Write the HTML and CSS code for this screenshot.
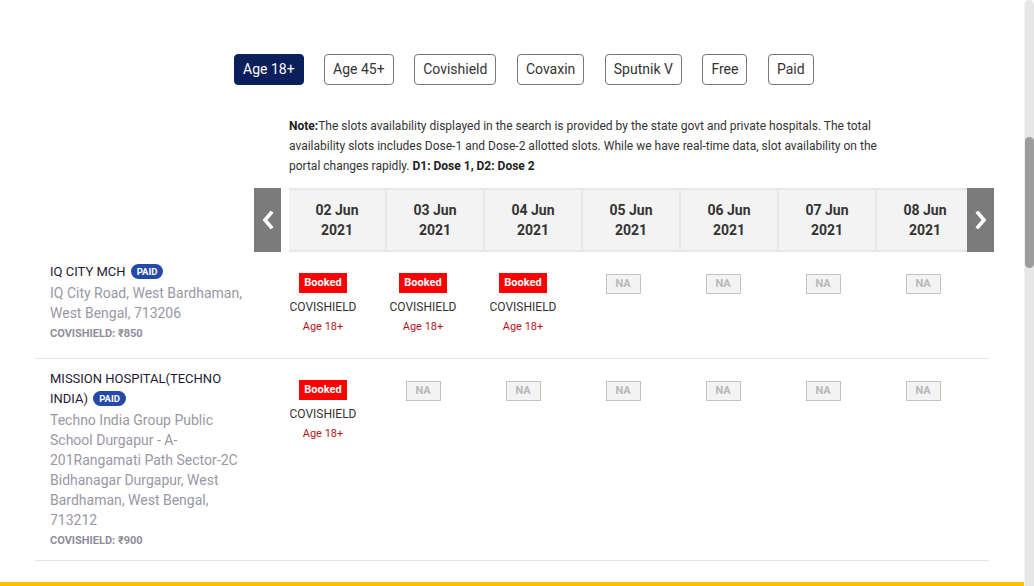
FILE: index.html
```html
<!DOCTYPE html>
<html>
<head>
<meta charset="utf-8">
<link rel="stylesheet" href="styles.css">
</head>
<body>
<div class="page">
  <div class="wrap">
    <div class="filters">
      <button class="chip active">Age 18+</button>
      <button class="chip">Age 45+</button>
      <button class="chip">Covishield</button>
      <button class="chip">Covaxin</button>
      <button class="chip">Sputnik V</button>
      <button class="chip">Free</button>
      <button class="chip">Paid</button>
    </div>
    <p class="note"><b>Note:</b>The slots availability displayed in the search is provided by the state govt and private hospitals. The total availability slots includes Dose-1 and Dose-2 allotted slots. While we have real-time data, slot availability on the portal changes rapidly. <b>D1: Dose 1, D2: Dose 2</b></p>
    <div class="dates">
      <div class="arrow left"><svg width="12" height="18" viewBox="0 0 12 18"><polyline points="9,2 3,9 9,16" fill="none" stroke="#fff" stroke-width="3.6" stroke-linecap="square"/></svg></div>
      <div class="date-cells">
        <div class="dc">02 Jun<br>2021</div>
        <div class="dc">03 Jun<br>2021</div>
        <div class="dc">04 Jun<br>2021</div>
        <div class="dc">05 Jun<br>2021</div>
        <div class="dc">06 Jun<br>2021</div>
        <div class="dc">07 Jun<br>2021</div>
        <div class="dc">08 Jun<br>2021</div>
        <div class="arrow right"><svg width="12" height="18" viewBox="0 0 12 18"><polyline points="3,2 9,9 3,16" fill="none" stroke="#fff" stroke-width="3.6" stroke-linecap="square"/></svg></div>
      </div>
    </div>

    <div class="row">
      <div class="info">
        <div class="name">IQ CITY MCH <span class="paid">PAID</span></div>
        <div class="addr">IQ City Road, West Bardhaman, West Bengal, 713206</div>
        <div class="price">COVISHIELD: ₹850</div>
      </div>
      <div class="slots">
        <div class="slot"><span class="booked">Booked</span><span class="vac">COVISHIELD</span><span class="age">Age 18+</span></div>
        <div class="slot"><span class="booked">Booked</span><span class="vac">COVISHIELD</span><span class="age">Age 18+</span></div>
        <div class="slot"><span class="booked">Booked</span><span class="vac">COVISHIELD</span><span class="age">Age 18+</span></div>
        <div class="slot"><span class="na">NA</span></div>
        <div class="slot"><span class="na">NA</span></div>
        <div class="slot"><span class="na">NA</span></div>
        <div class="slot"><span class="na">NA</span></div>
      </div>
    </div>

    <div class="row">
      <div class="info">
        <div class="name">MISSION HOSPITAL(TECHNO INDIA) <span class="paid">PAID</span></div>
        <div class="addr">Techno India Group Public School Durgapur - A-201Rangamati Path Sector-2C Bidhanagar Durgapur, West Bardhaman, West Bengal, 713212</div>
        <div class="price">COVISHIELD: ₹900</div>
      </div>
      <div class="slots">
        <div class="slot"><span class="booked">Booked</span><span class="vac">COVISHIELD</span><span class="age">Age 18+</span></div>
        <div class="slot"><span class="na">NA</span></div>
        <div class="slot"><span class="na">NA</span></div>
        <div class="slot"><span class="na">NA</span></div>
        <div class="slot"><span class="na">NA</span></div>
        <div class="slot"><span class="na">NA</span></div>
        <div class="slot"><span class="na">NA</span></div>
      </div>
    </div>
  </div>
  <div class="footer"></div>
</div>
<div class="scrollbar"><div class="thumb"></div></div>
</body>
</html>
```
FILE: styles.css
```css
* { box-sizing: border-box; }
html, body { margin: 0; padding: 0; }
body {
  width: 1034px;
  height: 586px;
  overflow: hidden;
  background: #fff;
  font-family: Roboto, "Liberation Sans", sans-serif;
  color: #333;
  position: relative;
}
.page { width: 1024px; }
.wrap {
  width: 954px;
  margin: 0 auto;
  padding-top: 54px;
}
.filters {
  display: flex;
  gap: 20.5px;
  padding-left: 199px;
}
.chip {
  height: 31px;
  padding: 0 8px;
  border: 1px solid #767676;
  border-radius: 4px;
  background: #fff;
  font-family: Roboto, "Liberation Sans", sans-serif;
  font-size: 14px;
  color: #333;
  line-height: 29px;
  cursor: pointer;
}
.chip.active {
  background: #0a1f5c;
  border-color: #0a1f5c;
  color: #fff;
}
.note {
  margin: 31px 0 0 254px;
  width: 600px;
  font-size: 12px;
  line-height: 20px;
  color: #333;
}
.note b { color: #222; }
.dates {
  display: flex;
  margin: 12px 0 0 219px;
  height: 64px;
}
.arrow {
  width: 27px;
  height: 64px;
  background: #7b7b7b;
  display: flex;
  align-items: center;
  justify-content: center;
}
.date-cells {
  margin-left: 8px;
  display: flex;
  position: relative;
  border-top: 2px solid #e7e7e7;
  border-bottom: 2px solid #e7e7e7;
  background: #f3f3f3;
}
.dc {
  width: 98px;
  border-right: 2px solid #e7e7e7;
  display: flex;
  align-items: center;
  justify-content: center;
  text-align: center;
  font-size: 14px;
  font-weight: bold;
  line-height: 20px;
  color: #333;
}
.arrow.right {
  position: absolute;
  left: 678px;
  top: -2px;
}
.row {
  display: flex;
  min-height: 107px;
  padding: 10px 0 12px 15px;
  border-bottom: 1px solid #e3e3e3;
}
.info {
  width: 200px;
  flex-shrink: 0;
}
.name {
  font-size: 13px;
  line-height: 20px;
  color: #1d1b33;
}
.paid {
  display: inline-block;
  background: #2449a9;
  color: #fff;
  font-size: 9.5px;
  font-weight: bold;
  line-height: 15px;
  height: 15px;
  padding: 0 6px;
  border-radius: 8px;
  vertical-align: 1px;
  margin-left: 2px;
}
.addr {
  margin-top: 1px;
  font-size: 14px;
  line-height: 20px;
  color: #9a97a6;
}
.price {
  margin-top: 4px;
  font-size: 11px;
  font-weight: bold;
  line-height: 14px;
  color: #8f8c9b;
}
.slots {
  display: flex;
  margin-left: 23px;
  padding-top: 11px;
}
.slot {
  width: 100px;
  display: flex;
  flex-direction: column;
  align-items: center;
}
.booked {
  background: #ff0000;
  color: #fff;
  font-size: 11px;
  font-weight: bold;
  height: 20px;
  line-height: 20px;
  padding: 0 5px;
}
.vac {
  margin-top: 4px;
  font-size: 12px;
  line-height: 20px;
  color: #333;
}
.age {
  font-size: 11px;
  line-height: 20px;
  color: #b3161c;
}
.na {
  margin-top: 1px;
  width: 35px;
  height: 20px;
  border: 1px solid #c2c2c2;
  background: #f3f3f3;
  color: #b9b9b9;
  font-size: 11px;
  font-weight: bold;
  line-height: 18px;
  text-align: center;
}
.footer {
  margin-top: 21px;
  height: 10px;
  border-top: 4px solid #ffbf00;
}
.scrollbar {
  position: absolute;
  top: 0;
  right: 0;
  width: 10px;
  height: 586px;
  background: #e6e6e6;
  border-radius: 5px 5px 0 0;
  border-left: 1px solid #f0f0f0;
}
.thumb {
  position: absolute;
  top: 137px;
  left: 0;
  width: 9px;
  height: 131px;
  background: #9d9d9d;
  border-radius: 5px;
}
```
